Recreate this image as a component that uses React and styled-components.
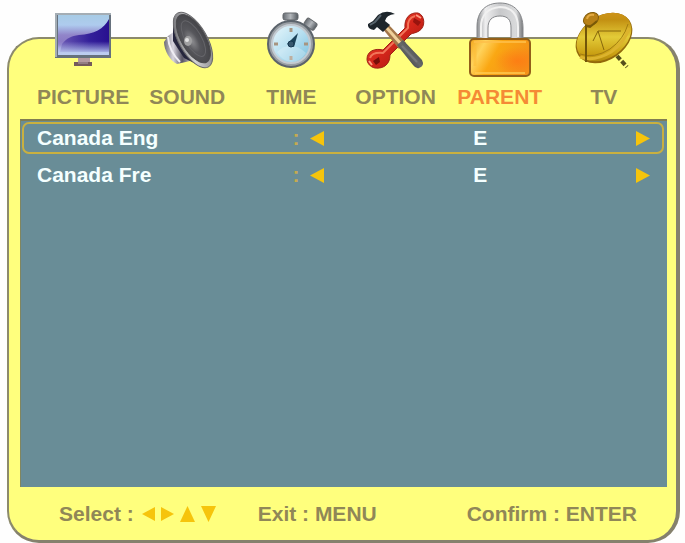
import React, { useState } from 'react';
import styled, { createGlobalStyle } from 'styled-components';

const GlobalStyle = createGlobalStyle`
  * { box-sizing: border-box; }
  body {
    margin: 0;
    background: #fefefe;
    font-family: "Liberation Sans", Arial, sans-serif;
    font-size: 21px;
    font-weight: 700;
    line-height: 24px;
  }
  button { font: inherit; color: inherit; }
`;

const Page = styled.main`
  display: flex;
  min-height: 100vh;
  padding: 37px 5px 0 7px;
`;

const Panel = styled.section`
  flex: 1;
  min-width: 0;
  display: flex;
  flex-direction: column;
  background: #ffff7d;
  border: 2px solid #8c8a6c;
  border-right: 4px solid #85816d;
  border-bottom: 3px solid #85816d;
  border-radius: 32px;
`;

const Tabs = styled.nav`
  display: grid;
  grid-template-columns: repeat(6, 1fr);
  margin-top: -37px;
  padding: 0 20px 10px 22px;
`;

const Tab = styled.button`
  display: flex;
  flex-direction: column;
  align-items: center;
  gap: 5px;
  padding: 0;
  border: 0;
  background: none;
  cursor: pointer;
  color: ${(p) => (p.$active ? '#f58a35' : '#908757')};
`;

const TabIcon = styled.svg`
  width: 72px;
  height: 78px;
`;

const Screen = styled.div`
  flex: 1;
  display: flex;
  flex-direction: column;
  gap: 5px;
  margin: 0 9px 0 11px;
  padding: 1px 3px 2px 1px;
  background: #698d97;
  border-top: 2px solid #817d51;
  border-left: 1px solid #81865f;
`;

const Row = styled.div`
  display: grid;
  grid-template-columns: 5fr 7fr;
  align-items: center;
  height: 32px;
  padding: 0 12px 0 13px;
  border: 2px solid ${(p) => (p.$active ? '#c9b040' : 'transparent')};
  border-radius: 7px;
  color: #f4ffff;
`;

const Stepper = styled.div`
  display: flex;
  align-items: center;
`;

const Colon = styled.span`
  width: 18px;
  color: #c5ab50;
`;

const StepButton = styled.button`
  display: flex;
  padding: 0;
  border: 0;
  background: none;
  cursor: pointer;
`;

const Value = styled.output`
  flex: 1;
  text-align: center;
`;

const Footer = styled.footer`
  display: flex;
  align-items: center;
  height: 53px;
  padding: 0 39px 0 50px;
  color: #908757;
`;

const Hint = styled.span`
  display: flex;
  align-items: center;
  gap: 8px;
  &:nth-child(2) { margin-left: 42px; }
  &:last-child { margin-left: auto; }
`;

const Keys = styled.span`
  display: flex;
  align-items: center;
  gap: 6px;
`;

const Triangle = styled.svg`
  display: block;
  width: ${(p) => p.$size}px;
  height: ${(p) => p.$size + 1}px;
  fill: #f6c40c;
`;

const arrows = {
  left: 'M16 0V16L0 8Z',
  right: 'M0 0V16L16 8Z',
  up: 'M0 16H16L8 0Z',
  down: 'M0 0H16L8 16Z',
};

function Arrow({ direction, size = 14 }) {
  return (
    <Triangle $size={size} viewBox="0 0 16 16" preserveAspectRatio="none" aria-hidden="true">
      <path d={arrows[direction]} />
    </Triangle>
  );
}

function PictureIcon() {
  return (
    <TabIcon viewBox="47 2 72 78" aria-hidden="true">
      <defs>
        <linearGradient id="glass" x1="0" y1="0" x2="0" y2="1">
          <stop offset="0" stopColor="#a7cbe5" />
          <stop offset=".25" stopColor="#aecbee" />
          <stop offset=".5" stopColor="#9185c9" />
          <stop offset=".75" stopColor="#8775c3" />
          <stop offset="1" stopColor="#c8dcf5" />
        </linearGradient>
        <linearGradient id="wave" x1="0" y1="0" x2="1" y2="0">
          <stop offset="0" stopColor="#6a58b4" />
          <stop offset=".6" stopColor="#34209a" />
          <stop offset="1" stopColor="#281090" />
        </linearGradient>
        <linearGradient id="waveFade" x1="0" y1="0" x2="0" y2="1">
          <stop offset=".45" stopColor="#b0b8e8" stopOpacity="0" />
          <stop offset=".95" stopColor="#bccdf0" />
        </linearGradient>
      </defs>
      <path d="M78 57H90V62H78Z" fill="#b59aa0" />
      <path d="M74 62H92V66H74Z" fill="#755b5c" />
      <path d="M78 63H88" stroke="#b4a1aa" />
      <path d="M55 13H111V58H55Z" fill="#66717d" />
      <path d="M55 13H111V15H57V57H55Z" fill="#a4adb4" />
      <path d="M58 15H109V55H58Z" fill="url(#glass)" />
      <path d="M62 44C67 38 71 36 79 35C94 34 104 29 109 19V52H60Z" fill="url(#wave)" />
      <path d="M58 30H109V55H58Z" fill="url(#waveFade)" />
    </TabIcon>
  );
}

function SoundIcon() {
  return (
    <TabIcon viewBox="151 2 72 78" aria-hidden="true">
      <defs>
        <radialGradient id="cone" cx=".4" cy=".52" r=".6">
          <stop offset="0" stopColor="#8e8e91" />
          <stop offset=".4" stopColor="#57575c" />
          <stop offset="1" stopColor="#434347" />
        </radialGradient>
        <linearGradient id="magnet">
          <stop offset="0" stopColor="#6e6c76" />
          <stop offset=".35" stopColor="#d8d5df" />
          <stop offset=".7" stopColor="#5a5765" />
          <stop offset="1" stopColor="#aaa7b0" />
        </linearGradient>
        <linearGradient id="rim" x1="0" y1="0" x2="1" y2="1">
          <stop offset="0" stopColor="#55555a" />
          <stop offset=".5" stopColor="#d3d3d5" />
          <stop offset="1" stopColor="#777779" />
        </linearGradient>
      </defs>
      <path d="M168 36L175 31L190 61L177 64C170 61 164 50 164 42Z" fill="url(#magnet)" />
      <path d="M173 26L173 41L184 58L198 65L178 19Z" fill="#26263d" />
      <path d="M168 37Q169 51 180 62" fill="none" stroke="#efedf3" strokeWidth="2" />
      <g transform="rotate(-30 193 40)">
        <ellipse cx="193" cy="40" rx="14" ry="31" fill="url(#rim)" stroke="#68686b" />
        <ellipse cx="194" cy="39" rx="12" ry="27" fill="url(#cone)" stroke="#4b4b4e" />
        <ellipse cx="194" cy="39" rx="8" ry="20" fill="none" stroke="#65656a" />
      </g>
      <ellipse cx="188" cy="41" rx="4" ry="5" fill="#a0a0a1" />
      <circle cx="187" cy="40" r="2" fill="#e2e2e2" />
    </TabIcon>
  );
}

function TimeIcon() {
  return (
    <TabIcon viewBox="255 2 72 78" aria-hidden="true">
      <defs>
        <linearGradient id="dial" x1="0" y1="0" x2="1" y2="1">
          <stop offset="0" stopColor="#e9f8fc" />
          <stop offset=".5" stopColor="#b6dff0" />
          <stop offset="1" stopColor="#76bedd" />
        </linearGradient>
        <linearGradient id="steel">
          <stop offset="0" stopColor="#666b72" />
          <stop offset=".5" stopColor="#b2b6ba" />
          <stop offset="1" stopColor="#555b61" />
        </linearGradient>
      </defs>
      <path d="M287 18H295V26H287Z" fill="#777c80" />
      <rect x="283" y="13" width="15" height="7" rx="2" fill="url(#steel)" stroke="#62676b" />
      <g transform="rotate(35 310 25)">
        <path d="M307 25H313V33H307Z" fill="#777c80" />
        <rect x="304" y="20" width="12" height="8" rx="2" fill="url(#steel)" stroke="#666a6d" />
      </g>
      <circle cx="291" cy="44" r="23" fill="#9a9fa4" stroke="#5c646c" strokeWidth="2" />
      <circle cx="291" cy="44" r="19" fill="url(#dial)" stroke="#c3cbd2" strokeWidth="2" />
      <path d="M291 28V32M291 56V60M274 44H278M304 44H308" stroke="#a79581" strokeWidth="3" />
      <path d="M277 52Q291 39 306 53Q300 62 291 62Q282 61 277 52Z" fill="#fff" opacity=".25" />
      <path d="M287 44L298 33L294 47Z" fill="#1c4258" />
      <circle cx="291" cy="44" r="3" fill="#38586e" stroke="#17384f" />
    </TabIcon>
  );
}

function OptionIcon() {
  return (
    <TabIcon viewBox="360 2 72 78" aria-hidden="true">
      <defs>
        <linearGradient id="wrench" x1="0" y1="0" x2="1" y2="1">
          <stop offset="0" stopColor="#f4502f" />
          <stop offset=".5" stopColor="#d4261b" />
          <stop offset="1" stopColor="#941309" />
        </linearGradient>
        <linearGradient id="grip" x1="0" y1="1" x2="1" y2="0">
          <stop offset="0" stopColor="#191d22" />
          <stop offset=".5" stopColor="#67696a" />
          <stop offset="1" stopColor="#24282a" />
        </linearGradient>
      </defs>
      <path d="M367 59C367 51 375 48 383 50L405 28C404 18 410 12 418 13C425 15 426 27 419 31C416 33 413 33 411 34L390 55C390 64 384 69 375 68C370 67 367 63 367 59Z" fill="url(#wrench)" stroke="#9e2116" />
      <path d="M373 61L379 57L380 62L376 65Z" fill="#760d08" />
      <path d="M414 18L421 22L418 26L413 22Z" fill="#98140e" />
      <path d="M370 58Q372 52 383 53L408 28Q407 18 415 16" fill="none" stroke="#f27559" strokeWidth="2" />
      <path d="M369 61L372 65M416 15L421 18" stroke="#ff9c83" strokeWidth="2" />
      <path d="M382 28L388 24L406 43L399 49Z" fill="#a37649" />
      <path d="M386 27L401 44" stroke="#efd09a" strokeWidth="3" />
      <path d="M397 45L403 40L422 60Q425 66 419 68Q416 69 413 65Z" fill="url(#grip)" />
      <path d="M402 46L417 62" stroke="#77797a" strokeWidth="2" />
      <path d="M368 24L373 21L378 15Q386 9 395 14Q386 15 385 21L390 25L383 32L377 27L374 30Q367 29 368 24Z" fill="#1d252b" />
      <path d="M370 25L375 22L381 15" fill="none" stroke="#56636c" strokeWidth="2" />
    </TabIcon>
  );
}

function ParentIcon() {
  return (
    <TabIcon viewBox="464 2 72 78" aria-hidden="true">
      <defs>
        <linearGradient id="shackle">
          <stop offset="0" stopColor="#8f9194" />
          <stop offset=".18" stopColor="#eeeeef" />
          <stop offset=".5" stopColor="#c7c8ca" />
          <stop offset=".85" stopColor="#d9dadb" />
          <stop offset="1" stopColor="#77797c" />
        </linearGradient>
        <linearGradient id="lockBody" x1="0" y1="0" x2="1" y2=".35">
          <stop offset="0" stopColor="#f3a51a" />
          <stop offset=".25" stopColor="#ffd35b" />
          <stop offset=".5" stopColor="#faa713" />
          <stop offset="1" stopColor="#f59218" />
        </linearGradient>
        <radialGradient id="lockGlow" cx=".8" cy=".6" r=".4">
          <stop offset="0" stopColor="#ff7613" stopOpacity=".75" />
          <stop offset="1" stopColor="#ff7613" stopOpacity="0" />
        </radialGradient>
      </defs>
      <path d="M477 39V27C477 11 486 3 500 3C514 3 523 12 523 28V39H511V28C511 20 508 16 500 16C492 16 488 20 488 28V39Z" fill="url(#shackle)" stroke="#85878a" />
      <path d="M481 37V27C481 15 488 8 500 7C512 7 518 15 518 27V37" fill="none" stroke="#f1f1f1" strokeWidth="2" />
      <rect x="470" y="39" width="60" height="37" rx="4" fill="url(#lockBody)" stroke="#946019" strokeWidth="2" />
      <rect x="471" y="40" width="58" height="35" rx="3" fill="url(#lockGlow)" />
      <path d="M474 42H526" stroke="#ffc04a" strokeWidth="2" opacity=".8" />
      <path d="M475 73H525" stroke="#ffce55" strokeWidth="2" opacity=".7" />
      <path d="M475 47V66" stroke="#ffbe38" strokeWidth="3" opacity=".6" />
    </TabIcon>
  );
}

function TvIcon() {
  return (
    <TabIcon viewBox="568 2 72 78" aria-hidden="true">
      <defs>
        <linearGradient id="dish" x1="0" y1="1" x2="1" y2="0">
          <stop offset="0" stopColor="#926f09" />
          <stop offset=".25" stopColor="#c99e12" />
          <stop offset=".5" stopColor="#e3cb38" />
          <stop offset=".75" stopColor="#c39012" />
          <stop offset="1" stopColor="#df9722" />
        </linearGradient>
      </defs>
      <path d="M617 56L627 67" stroke="#57501b" strokeWidth="4" strokeDasharray="5 2" />
      <ellipse cx="604" cy="38" rx="31" ry="22" transform="rotate(-35 604 38)" fill="#93690a" />
      <ellipse cx="604" cy="37" rx="30" ry="21" transform="rotate(-35 604 37)" fill="url(#dish)" />
      <path d="M580 54Q594 59 610 49Q624 39 628 24" fill="none" stroke="#a37b10" strokeWidth="1" />
      <path d="M580 57Q594 62 611 52Q625 42 629 28" fill="none" stroke="#dcb32d" strokeWidth="3" />
      <path d="M598 31H621M598 31L604 50M598 31L593 41" fill="none" stroke="#86670c" strokeWidth="1" />
      <path d="M586 25V62" stroke="#715509" strokeWidth="2" />
      <ellipse cx="591" cy="19" rx="8" ry="6" transform="rotate(-30 591 19)" fill="#b88117" stroke="#835c0b" />
      <path d="M587 19Q588 14 594 15" fill="none" stroke="#e4aa42" strokeWidth="2" />
      <path d="M586 26L590 27L597 21" fill="none" stroke="#795907" strokeWidth="2" />
    </TabIcon>
  );
}

const tabs = [
  { label: 'PICTURE', Icon: PictureIcon },
  { label: 'SOUND', Icon: SoundIcon },
  { label: 'TIME', Icon: TimeIcon },
  { label: 'OPTION', Icon: OptionIcon },
  { label: 'PARENT', Icon: ParentIcon },
  { label: 'TV', Icon: TvIcon },
];

const ratings = ['Canada Eng', 'Canada Fre'];
const levels = ['E', 'C', 'C8+', 'G', 'PG', '14+', '18+'];

function SettingRow({ label, active, onSelect }) {
  const [level, setLevel] = useState(0);
  const step = (delta) => setLevel((level + delta + levels.length) % levels.length);
  return (
    <Row $active={active} role="group" aria-label={label} onClick={onSelect}>
      <span>{label}</span>
      <Stepper>
        <Colon>:</Colon>
        <StepButton type="button" aria-label={`${label} previous`} onClick={() => step(-1)}>
          <Arrow direction="left" />
        </StepButton>
        <Value>{levels[level]}</Value>
        <StepButton type="button" aria-label={`${label} next`} onClick={() => step(1)}>
          <Arrow direction="right" />
        </StepButton>
      </Stepper>
    </Row>
  );
}

export default function App() {
  const [activeTab, setActiveTab] = useState('PARENT');
  const [activeRow, setActiveRow] = useState('Canada Eng');
  return (
    <>
      <GlobalStyle />
      <Page>
        <Panel>
          <Tabs>
            {tabs.map(({ label, Icon }) => (
              <Tab
                key={label}
                type="button"
                $active={label === activeTab}
                aria-pressed={label === activeTab}
                onClick={() => setActiveTab(label)}
              >
                <Icon />
                <span>{label}</span>
              </Tab>
            ))}
          </Tabs>
          <Screen>
            {ratings.map((label) => (
              <SettingRow
                key={label}
                label={label}
                active={label === activeRow}
                onSelect={() => setActiveRow(label)}
              />
            ))}
          </Screen>
          <Footer>
            <Hint>
              Select :
              <Keys>
                <Arrow direction="left" size={13} />
                <Arrow direction="right" size={13} />
                <Arrow direction="up" size={15} />
                <Arrow direction="down" size={15} />
              </Keys>
            </Hint>
            <Hint>Exit : MENU</Hint>
            <Hint>Confirm : ENTER</Hint>
          </Footer>
        </Panel>
      </Page>
    </>
  );
}
